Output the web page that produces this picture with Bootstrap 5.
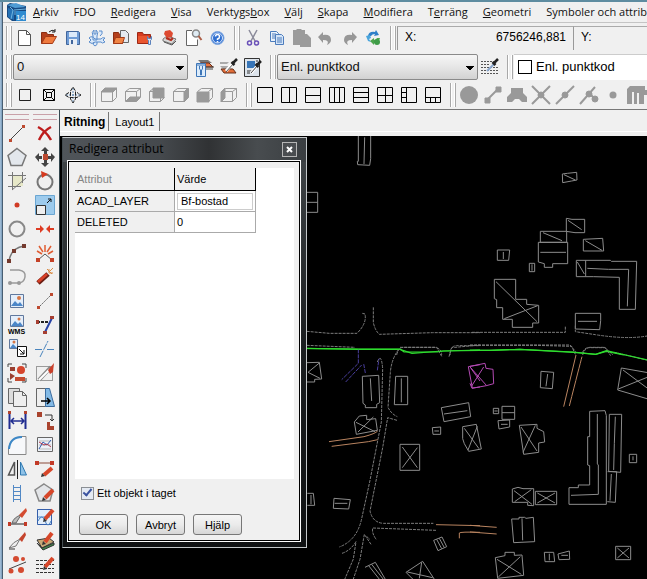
<!DOCTYPE html>
<html lang="sv">
<head>
<meta charset="utf-8">
<meta name="viewport" content="width=device-width, initial-scale=1">
<title>Redigera attribut</title>
<link rel="stylesheet" href="https://cdn.jsdelivr.net/npm/bootstrap@5.3.0/dist/css/bootstrap.min.css">
<style>
body{font:11px/16px "Liberation Sans",Arial,sans-serif;color:#000;background:#f0f0f0;overflow:hidden}
.shell{border-top:2px solid #5e8ca0;min-height:100vh}
.edge{width:3px;background:linear-gradient(90deg,#a9c4dc,#7e9fbd 60%,#22303c)}
.menu-row{height:21px;border-bottom:1px solid #c4c4c4;font:11px/18px "Open Sans","Noto Sans",sans-serif;gap:6px;white-space:nowrap}
.menu-items{gap:15px}
.menu-row a{color:#111;text-decoration:none}
.app-logo{width:20px;height:18px}
.tool-row{height:29px;padding-left:3px;white-space:nowrap}
.tool-row.last-row{border-bottom:1px solid #777}
.grip{width:6px;height:24px;margin-right:1px;flex:none;border:solid #a8a8a8;border-width:0 1px;background:linear-gradient(90deg,#fff 1px,#f0f0f0 1px 3px,#fff 3px)}
.tool + .grip{margin-left:5px}
.tool{width:24px;height:24px;padding:0;border:0;background:none;flex:none;display:block;fill:none}
.tool svg{display:block;width:24px;height:24px;stroke-width:1}
.combo{height:26px;flex:none;border:1px solid #8a8a8a;border-radius:2px;appearance:none;font:13px/20px "Liberation Sans",Arial,sans-serif;color:#111;padding:0 20px 0 3px;background:linear-gradient(to bottom right,#000 50%,transparent 52%) no-repeat right 3px top 11px/4px 4px,linear-gradient(to bottom left,#000 50%,transparent 52%) no-repeat right 7px top 11px/4px 4px,linear-gradient(#f6f6f6,#e6e6e6 50%,#d2d2d2)}
.layer-combo{width:175px;margin-right:5px}
.code-combo{width:201px}
.code-field{height:26px;background:#fff;border-top:1px solid #ccc;font:13px/20px "Liberation Sans",Arial,sans-serif;min-width:0}
.swatch{width:14px;height:14px;border:1px solid #000}
.coord{height:24px;border-top:1px solid #aaa;border-left:1px solid #999;font-size:12px;min-width:0;padding:2px 7px}
.coord-x{width:176px;flex:none}
.side{width:57px;padding:0 2px;border-right:1px solid #34474f}
.side-grid{display:grid;grid-template-columns:24px 24px;column-gap:4px}
.hgrip{height:6px;margin:4px 0 1px;border:solid #c9a0a8;border-width:1px 0}
.tabs{height:22px;border-bottom:1px solid #fff;margin-bottom:4px;padding-left:1px}
.tabs button{border:0;background:none;padding:0 5px 0 6px;border-right:1px solid #777;height:19px;line-height:18px;margin-top:2px}
.tabs .current{font-weight:bold;font-size:12px;padding:0 3px}
.map-area{background:#000;min-height:440px;overflow:hidden}
.map-area>svg{position:absolute;inset:0;width:100%;height:100%;fill:none;stroke:#8c8c8c}
.map-area>svg path{vector-effect:non-scaling-stroke}
.map-area .dashed{stroke-dasharray:3 1;stroke:#7c7c7c}
.map-area .green{stroke:#2fdc2f;stroke-width:1.2}
.map-area .tan{stroke:#b98460}
.map-area .violet{stroke:#4a3f9e;stroke-dasharray:4 1}
.map-area .magenta{stroke:#b44ab4}
.dlg{position:absolute;left:2px;top:1px;width:245px;padding:0 5px 5px 4px;border:1px solid #c4c8ca;border-left-color:#444c50;background:linear-gradient(90deg,#50555a,#45494d 40%,#303234 60%,#484c4f 80%,#3a3e41) top/100% 24px no-repeat,linear-gradient(#43484b,#1c1f21 50%,#101213)}
.dlg-title{height:22px;padding-left:2px;font:12px/20px "Open Sans","Noto Sans",sans-serif;color:#000}
.dlg-close{width:15px;height:15px;border:1px solid #b5b5b5;background:#4a4d50;padding:0}
.dlg-close svg{display:block;margin:auto}
.dlg-body{background:#f0f0f0;border:1px solid #fff;outline:1px solid #000;outline-offset:-2px;padding:7px 6px 6px 7px}
.sheet{background:#fff;min-height:311px}
.attr{width:181px;border-collapse:separate;border-spacing:0;line-height:14px}
.attr th,.attr td{height:21px;padding:0 2px;font-weight:normal;border-right:1px solid #aaa;border-bottom:1px solid #aaa}
.attr th{background:#f0f0f0}
.attr thead th{height:23px;border-color:#000}
.attr thead th:first-child{color:#858585}
.attr th:first-child{width:100px}
.attr input{width:76px;height:17px;border:1px solid #ccc;padding:0 3px;font:inherit;display:block}
.once{margin:6px 0 0 6px;gap:3px}
.once input{appearance:none;width:13px;height:13px;margin:0;border:1px solid #8b8f94;background:#e4eaf3;display:grid;place-items:center}
.once input:checked::before{content:"";width:5px;height:9px;border:solid #3a53a0;border-width:0 2px 2px 0;transform:rotate(40deg);margin-top:-3px}
.acts{margin:13px 0 0 4px;gap:8px}
.acts button{width:49px;height:21px;border:1px solid #777;border-radius:3px;background:linear-gradient(#f5f5f5,#ebebeb 50%,#d6d6d6);padding:0;line-height:18px;font-size:11px}
</style>
<script src="https://cdn.jsdelivr.net/npm/bootstrap@5.3.0/dist/js/bootstrap.bundle.min.js"></script>
</head>
<body>
<div class="shell d-flex">
<div class="edge flex-shrink-0"></div>
<div class="flex-grow-1 d-flex flex-column overflow-hidden">

<header>
<nav class="menu-row d-flex align-items-center ps-1" aria-label="Meny">
<svg class="app-logo flex-shrink-0" viewBox="0 0 20 18"><path d="M0 2l3-2 16 3v15H5L0 14z" fill="#174a83"/><path d="M0 2l9-2 10 4-11 1z" fill="#4f9cd4"/><path d="M1 5l6 2v10l-6-3z" fill="#2471b5"/><path d="M3 4l3 3-2 9M7 7l12-1M8 12V8" stroke="#6fb4e0" fill="none"/><path d="M9 8h10v10H9z" fill="#2f8bd0"/><text x="9" y="17" font-size="8" font-family="Liberation Sans" fill="#fff">14</text></svg>
<div class="menu-items d-flex"><a href="#"><u>A</u>rkiv</a><a href="#">FDO</a><a href="#"><u>R</u>edigera</a><a href="#"><u>V</u>isa</a><a href="#">Verktygs<u>b</u>ox</a><a href="#"><u>V</u>älj</a><a href="#"><u>S</u>kapa</a><a href="#"><u>M</u>odifiera</a><a href="#">T<u>e</u>rräng</a><a href="#"><u>G</u>eometri</a><a href="#">Symboler och attrib</a></div>
</nav>

<div class="tool-row d-flex align-items-center">
<span class="grip"></span>
<button class="tool" aria-label="Ny"><svg><path d="M5.500 4.500h8l4 4v11h-12z" fill="#fff" stroke="#555"/><path d="M13.500 4.500v4h4" stroke="#555"/></svg></button>
<button class="tool" aria-label="Öppna"><svg><path d="M4.500 17.500v-11h5l1 2h6v3" fill="#b5401d" stroke="#8c2e12"/><path d="M4.500 17.500l4-7h11l-4 7z" fill="#ef7a3d" stroke="#a53a17"/><path d="M12 6q3-3 6-1m0-2v3h-3" stroke="#222"/></svg></button>
<button class="tool" aria-label="Spara"><svg><path d="M5.500 5.500h12l1 1v12h-13z" fill="#6f9cd6" stroke="#42669c"/><path d="M8 6h8v5H8z" fill="#dceafa"/><path d="M8 13h8v6H8z" fill="#e8eef6"/><path d="M10 14h2v4h-2z" fill="#42669c"/></svg></button>
<button class="tool" aria-label="Verktyg"><svg stroke="#5b8dcc"><path d="M9 4v4h2V4q3 2 1 6v4h-4v-4q-2-4 1-6zM4 12q3-3 6 1h6q1-2 4-1l-2 2 2 2q-3 2-4 0h-6q-3 3-6 0l2-2zM9 16q-2 3 1 4 3-1 2-4M15 10q3-2 2-5h-3" fill="#dbe9f9"/></svg></button>
<button class="tool" aria-label="Öppna dokument"><svg><path d="M4.500 17.500v-11h5l1 2h3v9z" fill="#b5401d" stroke="#8c2e12"/><path d="M11.500 4.500h5l3 3v9h-8z" fill="#e4eaf0" stroke="#666"/><path d="M4.500 17.500l2-6h9l-2 6z" fill="#f08545" stroke="#a53a17"/></svg></button>
<button class="tool" aria-label="Mapp"><svg><path d="M4.500 17.500v-11h5l1 2h7v9z" fill="#d63b20" stroke="#9c2714"/><path d="M5 10h11v7H5z" fill="#e9552f"/><path d="M14.500 10.500v3l1 1v4h2v-4l1-1v-3l-1 2h-2z" fill="#d5e6fa" stroke="#5b83bd"/></svg></button>
<button class="tool" aria-label="Skriv ut"><svg><path d="M6 13l4-3 9 3-4 5-9-3z" fill="#d8d8d8" stroke="#777"/><path d="M7 16l8 3 4-4" stroke="#555"/><path d="M8 5l5-1 3 3-1 4-5 1-3-4z" fill="#dd4a31"/><path d="M9 12l5 2 2-2" stroke="#b12d1d" stroke-width="2"/></svg></button>
<button class="tool" aria-label="Förhandsgranska"><svg><path d="M5.500 4.500h11v15h-11z" fill="#fff"/><path d="M11 4.500H5.500v15h11v-6" stroke="#666"/><circle cx="15" cy="7.500" r="3.500" fill="#e0ecf4" stroke="#888" stroke-width="1.500"/><path d="M17.500 10l3 4" stroke="#ad5d45" stroke-width="2"/></svg></button>
<button class="tool" aria-label="Hjälp"><svg><circle cx="12.500" cy="12" r="6.500" fill="#2f6fd0" stroke="#7fa8e0"/><circle cx="12.500" cy="12" r="5" stroke="#dbe8fb"/><path d="M10.500 10.500q0-2 2-2t2 2-2 2.500v1m0 1v1.500" stroke="#fff" stroke-width="1.500"/></svg></button>
<span class="grip"></span>
<button class="tool" aria-label="Klipp ut"><svg><path d="M8 4l6 11M16 4l-6 11" stroke="#8a8a9a" stroke-width="1.500"/><circle cx="8.500" cy="17" r="2" stroke="#6a50b8" stroke-width="1.500"/><circle cx="15.500" cy="17" r="2" stroke="#6a50b8" stroke-width="1.500"/></svg></button>
<button class="tool" aria-label="Kopiera"><svg stroke="#4d7dbd"><path d="M5.500 5.500h6l2 2v8h-8z" fill="#eaf2fb"/><path d="M7 8h4M7 10h4M7 12h4"/><path d="M10.500 8.500h6l2 2v8h-8z" fill="#d4e4f7"/><path d="M12 12h5M12 14h5M12 16h5"/></svg></button>
<button class="tool" aria-label="Klistra in" disabled><svg><path d="M4 4h3l1-1h4l1 1h3v4h2l4 4v9H11v-2H4z" fill="#9b9b9b"/></svg></button>
<button class="tool" aria-label="Ångra" disabled><svg><path d="M5 11l5-5v3q8-1 8 5 0 3-4 5 3-5-4-5v3z" fill="#979797"/></svg></button>
<button class="tool" aria-label="Gör om" disabled><svg><path d="M20 11l-5-5v3q-8-1-8 5 0 3 4 5-3-5 4-5v3z" fill="#979797"/></svg></button>
<button class="tool" aria-label="Uppdatera"><svg><path d="M7 10q1-5 7-4l1-2 3 5-5 1 1-2q-3 0-4 2z" fill="#2e7fc8"/><path d="M5 10l4-1 1 3-2 1 2 3-3-1z" fill="#4aa5dc"/><path d="M19 12q-1 5-6 5v2l-4-4 4-3v2q2 0 3-2z" fill="#4ca54c"/><circle cx="16" cy="16" r="3" fill="#3f9c48"/></svg></button>
<span class="grip"></span>
<label class="coord coord-x d-flex justify-content-between">X: <output class="p-0">6756246,881</output></label>
<span class="coord flex-grow-1">Y:</span>
</div>

<div class="tool-row d-flex align-items-center">
<span class="grip"></span>
<select class="combo layer-combo" aria-label="Lager"><option>0</option></select>
<button class="tool" aria-label="Lager"><svg><path d="M5 5h10l4 3H8z" fill="#777"/><path d="M7 8h9l4 4h-9z" fill="#e8743e" stroke="#6b2d18"/><path d="M10 12h11M12 14h8" stroke="#444"/><path d="M3.500 8.500h9v13h-9z" fill="#dcecfb" stroke="#3e76b8"/><path d="M6.500 11v3l1 1v5h1v-5l1-1v-3M4 10h9" stroke="#3e76b8"/></svg></button>
<button class="tool" aria-label="Hämta lager"><svg><path d="M3 7h9l-2 2H3zM3 11h8l4 3H6z" fill="#aaa"/><path d="M4 14h12l3 4H7z" fill="#e26d38" stroke="#64301c"/><path d="M9 16l8-9" stroke="#fff" stroke-width="3"/><path d="M9 17l8-9" stroke="#555"/><path d="M14.500 7l3 3M16 8l4-4" stroke="#222" stroke-width="2.500"/></svg></button>
<button class="tool" aria-label="Egenskaper"><svg><path d="M3.500 3.500h15v18h-15z" fill="#dce3eb" stroke="#333"/><path d="M6 6h8v7H6z" fill="#3775b8"/><path d="M15 6h2M15 9h2M6 16h5M6 18h3" stroke="#333"/><path d="M10 18l7-8" stroke="#fff" stroke-width="3"/><path d="M10 18l7-8" stroke="#444"/><path d="M14.500 9l3 3M16 10l4-4" stroke="#222" stroke-width="2.500"/></svg></button>
<span class="grip"></span>
<select class="combo code-combo" aria-label="Punktkod"><option>Enl. punktkod</option></select>
<button class="tool" aria-label="Hämta punktkod"><svg><path d="M3 6.500h11M3 9.500h9M3 12.500h17M3 15.500h17M3 18.500h17" stroke="#555" stroke-dasharray="2 1"/><path d="M9 16l8-8" stroke="#8ba8cf" stroke-width="2"/><path d="M14.500 7l3 3M16 8l4-4" stroke="#222" stroke-width="2.500"/></svg></button>
<span class="grip"></span>
<div class="code-field flex-grow-1 d-flex align-items-center ps-1 gap-1"><span class="swatch"></span>Enl. punktkod</div>
</div>

<div class="tool-row last-row d-flex align-items-center">
<span class="grip"></span>
<button class="tool" aria-label="Rektangel"><svg stroke="#222"><path d="M6.500 6.500h11v11h-11z"/></svg></button>
<button class="tool" aria-label="Zooma allt"><svg stroke="#000"><path d="M6.500 6.500h11v11h-11zM9.500 9.500h5v5h-5zM6.500 6.500l3 3M17.500 6.500l-3 3M6.500 17.500l3-3M17.500 17.500l-3-3"/></svg></button>
<button class="tool" aria-label="Rotera vy"><svg stroke="#222"><path d="M12 5v14M5 12h14" stroke="#5d86b0" stroke-dasharray="2 1"/><path d="M9.500 8l2.500-4 2.500 4v8L12 20l-2.500-4zM8 9.500L4 12l4 2.500h8l4-2.500-4-2.500" stroke-dasharray="4 1"/></svg></button>
<span class="grip"></span>
<button class="tool" aria-label="Ovan" disabled><svg stroke="#999"><path d="M4.500 8.500h11v10h-11zM15.500 18.500l4-4v-9"/><path d="M4 9l4-4h12l-4 4z" fill="#999"/></svg></button>
<button class="tool" aria-label="Under" disabled><svg stroke="#999"><path d="M4.500 8.500l4-3h11v9l-4 4h-11zM4.500 8.500h11v10M15.500 8.500l4-3"/><path d="M5 18l4-4h10l-4 4z" fill="#999"/></svg></button>
<button class="tool" aria-label="Bak" disabled><svg stroke="#999"><path d="M8 5h11v10H8z" fill="#999"/><path d="M4.500 8.500h11v10h-11zM4.500 8.500l4-3M15.500 18.500l4-4"/></svg></button>
<button class="tool" aria-label="Höger" disabled><svg stroke="#999"><path d="M4.500 8.500l4-3h11v9l-4 4h-11zM4.500 8.500h11v10"/><path d="M15 9l4-4v10l-4 4z" fill="#999"/></svg></button>
<button class="tool" aria-label="Fram" disabled><svg stroke="#999"><path d="M4 9h12v10H4z" fill="#999"/><path d="M4.500 8.500l4-3h11v9l-4 4M15.500 8.500l4-3"/></svg></button>
<button class="tool" aria-label="Vänster" disabled><svg stroke="#999"><path d="M4.500 8.500l4-3h11v9l-4 4h-11zM4.500 8.500h11v10M15.500 8.500l4-3"/><path d="M4 9l4-4v10l-4 4z" fill="#999"/></svg></button>
<span class="grip"></span>
<button class="tool" aria-label="En vy"><svg stroke="#000"><path d="M4.500 4.500h15v15h-15z"/></svg></button>
<button class="tool" aria-label="Två kolumner"><svg stroke="#000"><path d="M4.500 4.500h15v15h-15zM12.500 5v14"/></svg></button>
<button class="tool" aria-label="Två rader"><svg stroke="#000"><path d="M4.500 4.500h15v15h-15zM5 12.500h14"/></svg></button>
<button class="tool" aria-label="Tre kolumner"><svg stroke="#000"><path d="M4.500 4.500h15v15h-15zM9.500 5v14M14.500 5v14"/></svg></button>
<button class="tool" aria-label="Tre rader"><svg stroke="#000"><path d="M4.500 4.500h15v15h-15zM5 9.500h14M5 14.500h14"/></svg></button>
<button class="tool" aria-label="Fyra vyer"><svg stroke="#000"><path d="M4.500 4.500h15v15h-15zM12.500 5v14M5 12.500h14"/></svg></button>
<button class="tool" aria-label="Tre till vänster"><svg stroke="#000"><path d="M4.500 4.500h15v15h-15zM9.500 5v14M5 9.500h4M5 14.500h4"/></svg></button>
<button class="tool" aria-label="Tre nedtill"><svg stroke="#000"><path d="M4.500 4.500h15v15h-15zM5 14.500h14M9.500 15v4M14.500 15v4"/></svg></button>
<span class="grip"></span>
<button class="tool" aria-label="Centrum" disabled><svg><circle cx="12" cy="12" r="9" fill="#999"/></svg></button>
<button class="tool" aria-label="Ände" disabled><svg fill="#999" stroke="#999"><path d="M6 17L17 6" stroke-width="2"/><path d="M4 15h5v5H4zM15 4h5v5h-5z"/></svg></button>
<button class="tool" aria-label="Symbol" disabled><svg><path d="M6 5h12v5l4 4v5h-5l-3-3h-4l-3 3H2v-5l4-4z" fill="#999"/></svg></button>
<button class="tool" aria-label="Skärning" disabled><svg stroke="#999"><path d="M3 3l18 18M3 21L21 3" stroke-width="2"/><circle cx="12" cy="12" r="3" fill="#999"/></svg></button>
<button class="tool" aria-label="Mitt" disabled><svg stroke="#999"><path d="M3 21L21 3" stroke-width="2"/><circle cx="12" cy="12" r="3" fill="#999"/></svg></button>
<button class="tool" aria-label="Närmast" disabled><svg stroke="#999"><path d="M3 21L18 4M11 9l9 9" stroke-width="2"/><circle cx="12" cy="11" r="3" fill="#999"/><circle cx="18" cy="16" r="3" fill="#999"/></svg></button>
<button class="tool" aria-label="Punkt" disabled><svg><circle cx="12" cy="12" r="3.500" fill="#999"/></svg></button>
<button class="tool" aria-label="Fästläge" disabled><svg><path d="M2 21V6l3-3h15v4h3v5h-4v9h-5V10h-2v11H9V9H7v12z" fill="#999"/></svg></button>
</div>
</header>

<div class="d-flex flex-grow-1">
<aside class="side flex-shrink-0">
<div class="side-grid">
<span class="hgrip"></span><span class="hgrip"></span>
<button class="tool" aria-label="Linje"><svg><path d="M5 19L18 6" stroke="#444"/><path d="M4 18h3v3H4zM17 4h3v3h-3z" fill="#bd4a30"/></svg></button>
<button class="tool" aria-label="Radera"><svg><path d="M5 6q8 4 13 13M18 6q-8 4-12 13" stroke="#bd1d1d" stroke-width="2.500"/></svg></button>
<button class="tool" aria-label="Polygon"><svg><path d="M12 3.500l9 7-4 10H6l-3-10z" fill="#e3e7ec" stroke="#777" stroke-width="1.500"/></svg></button>
<button class="tool" aria-label="Flytta"><svg><path d="M10 9h5v6h-5z" fill="#bd4a30"/><path d="M12 2l4 4h-2v3h-3V6H8zM12 22l4-4h-2v-3h-3v3H8zM2 12l4-4v3h3v3H6v3zM22 12l-4-4v3h-3v3h3v3z" fill="#444"/></svg></button>
<button class="tool" aria-label="Område"><svg><path d="M7 6h11v11H7z" fill="#e7e8c8"/><path d="M7.500 3v18M17.500 3v11M3 6.500h18M3 17.500h13M7 21L21 9" stroke="#777"/></svg></button>
<button class="tool" aria-label="Rotera"><svg><circle cx="12" cy="13" r="7.500" stroke="#777" stroke-width="2"/><path d="M8 2l7 3-6 4z" fill="#d63b20"/></svg></button>
<button class="tool" aria-label="Punkt"><svg><circle cx="12" cy="12" r="2.500" fill="#d13b25"/></svg></button>
<button class="tool" aria-label="Skala"><svg><path d="M2.500 2.500h19v19h-19z" fill="#9dcbed" stroke="#6aa6d2"/><path d="M3.500 12.500h9v9h-9z" fill="#eee" stroke="#333"/><path d="M14 10l4-4m-3 0h3v3" stroke="#111"/></svg></button>
<button class="tool" aria-label="Cirkel"><svg><circle cx="12" cy="12" r="7.500" stroke="#888" stroke-width="2"/></svg></button>
<button class="tool" aria-label="Förena"><svg><path d="M3 11h4V8l4 4-4 4v-3H3zM21 11h-4V8l-4 4 4 4v-3h4z" fill="#dd3b22"/></svg></button>
<button class="tool" aria-label="Båge"><svg><path d="M4 20Q6 7 19 5" stroke="#777" stroke-width="1.500"/><path d="M2 18h4v4H2zM7 8h4v4H7zM17 3h4v4h-4z" fill="#743a2e"/></svg></button>
<button class="tool" aria-label="Explodera"><svg><path d="M12 11v-7M10 11L6 5M14 11l4-6M9 13l-5-3M15 13l5-3" stroke="#e05c31" stroke-width="1.500"/><path d="M5 19l7-6 7 6" stroke="#555"/><path d="M3 17h4v4H3zM17 17h4v4h-4z" fill="#c44228"/></svg></button>
<button class="tool" aria-label="Polylinje"><svg><path d="M5 5h9q7 1 6 7t-7 6H4" stroke="#999" stroke-width="1.500"/><circle cx="5" cy="18" r="2" fill="#999"/><circle cx="14" cy="18" r="2" fill="#999"/></svg></button>
<button class="tool" aria-label="Trollspö"><svg><path d="M5 18L15 9" stroke="#6a1d13" stroke-width="5"/><path d="M5 17L14 9" stroke="#d84028" stroke-width="3"/><path d="M16 4v4h4M14 4l5 5M20 3l-3 3" stroke="#d88b45"/></svg></button>
<button class="tool" aria-label="Bild"><svg><path d="M5.500 5.500h13v13h-13z" fill="#e4eefa" stroke="#60789d"/><path d="M6 17l4-5 3 3 2-2 3 4z" fill="#4b86c8"/><circle cx="14" cy="9" r="2" fill="#d67645"/></svg></button>
<button class="tool" aria-label="Förläng"><svg><path d="M7 17L18 6" stroke="#666" stroke-dasharray="2 1"/><path d="M4 17h3v3H4zM17 4h3v3h-3z" fill="#bd4a30"/></svg></button>
<button class="tool" aria-label="WMS"><svg><path d="M5.500 2.500h13v11h-13z" fill="#e4eefa" stroke="#60789d"/><path d="M6 13l4-5 3 3 2-2 3 4z" fill="#4b86c8"/><circle cx="14" cy="6" r="1.500" fill="#d67645"/><text x="3" y="21" font-size="7" font-weight="bold" font-family="Liberation Sans" fill="#000">WMS</text></svg></button>
<button class="tool" aria-label="Trimma"><svg><path d="M4 9h12" stroke="#222" stroke-width="2" stroke-dasharray="3 1"/><path d="M12 19l7-14" stroke="#2641a5" stroke-width="2"/><path d="M3 7h3v4H3zM17 3h4v3h-4zM10 18h4v3h-4z" fill="#a63f32"/></svg></button>
<button class="tool" aria-label="Bildreferens"><svg><path d="M4.500 2.500h8v9h-8z" fill="#e4eefa" stroke="#60789d"/><path d="M5 11l3-4 4 4z" fill="#4b86c8"/><circle cx="9" cy="5" r="1.500" fill="#d67645"/><path d="M12.500 9.500h9v10h-9zM14 12l5 5m0-4v4h-4" fill="#fff" stroke="#111"/></svg></button>
<button class="tool" aria-label="Bryt linje"><svg><path d="M2 12.500h8M14 12.500h8M7 20l8-16" stroke="#4984bd" stroke-dasharray="7 1"/></svg></button>
<button class="tool" aria-label="Markera"><svg><path d="M3 6V3h4M17 3h4v4M3 17v4h4M21 17v4h-4" stroke="#444"/><path d="M5 6h5v4H5zM5 12l5 3-5 4z" fill="#9b3f30"/><circle cx="16" cy="9" r="4" fill="#d6452c"/><path d="M10 16h10v4H10z" fill="#c54b30"/></svg></button>
<button class="tool" aria-label="Klipp område"><svg><path d="M3.500 5.500h16v14h-16z" stroke="#444" stroke-dasharray="1 1"/><path d="M6 19L18 6" stroke="#888" stroke-width="4"/><path d="M6 19L17 8" stroke="#fff" stroke-width="2"/><path d="M15 9l6-7-1 9-3 2z" fill="#c9402b"/></svg></button>
<button class="tool" aria-label="Kopiera"><svg><path d="M3.500 3.500h11v15h-11z" fill="#ddd" stroke="#666"/><path d="M8.500 6.500h9l4 4v11h-13z" fill="#eee" stroke="#666"/><path d="M17.500 6.500v4h4" stroke="#666"/></svg></button>
<button class="tool" aria-label="Sträck"><svg><path d="M3.500 3.500h9v18h-9z" fill="#eee" stroke="#666"/><path d="M12.500 3.500h4l5 18h-9z" fill="#83bae6" stroke="#3b6c9f"/><path d="M8 16h9m-3-3l3 3-3 3" stroke="#000" stroke-width="1.500"/></svg></button>
<button class="tool" aria-label="Avstånd"><svg><path d="M4.500 4v16M20.500 4v16" stroke="#202c90" stroke-width="2"/><path d="M6 12h13M9 9l-3 3 3 3M16 9l3 3-3 3" stroke="#202c90" stroke-width="1.500"/><path d="M3 2h3v3H3zM19 2h3v3h-3z" fill="#b14530"/></svg></button>
<button class="tool" aria-label="Flytta och rotera"><svg><path d="M4 3h5v5H4zM14 13h3v4h4v4h-7z" fill="#a9432e"/><path d="M12 6h7v6m-2-2l2 2 2-2" stroke="#333"/></svg></button>
<button class="tool" aria-label="Avrunda"><svg><path d="M3.500 21.500V16Q5 4 17 3.500h4v18z" fill="#f7f8fa" stroke="#888"/><path d="M4 16Q5 4 17 4" stroke="#3d88c7" stroke-width="2"/></svg></button>
<button class="tool" aria-label="Diagram"><svg><path d="M4.500 4.500h15v14h-15z" fill="#eef2f8" stroke="#666"/><path d="M6 8h12M6 12h12M6 16h12" stroke="#bbb"/><path d="M6 16l4-7 4 3 4-5" stroke="#345eb0"/><path d="M6 9l5 3 3-1 4 3" stroke="#b33d50"/></svg></button>
<button class="tool" aria-label="Spegla"><svg><path d="M9.500 5v13h-6z" stroke="#555" stroke-width="1.500"/><path d="M15.500 5v13h6z" fill="#8fc2e8" stroke="#307ab2"/><path d="M12.500 3v19" stroke="#222"/></svg></button>
<button class="tool" aria-label="Redigera linje"><svg><path d="M4 6h15" stroke="#8a4b3b"/><path d="M2 4h4v4H2zM17 4h4v4h-4z" fill="#c23a27"/><path d="M11 18l8-7" stroke="#d7472a" stroke-width="4"/><path d="M8 20l1-4 3 3z" fill="#333"/></svg></button>
<button class="tool" aria-label="Stege"><svg><path d="M8.500 4v17M15.500 4v17M8 6.500h8M8 10.500h8M8 14.500h8M8 18.500h8" stroke="#5188c5"/></svg></button>
<button class="tool" aria-label="Redigera polygon"><svg><path d="M11 3l9 6-3 11H6L2 9z" fill="#e3e5e8" stroke="#888" stroke-width="1.500"/><path d="M12 17l8-8" stroke="#d7472a" stroke-width="4"/><path d="M9 20l1-4 3 3z" fill="#333"/></svg></button>
<button class="tool" aria-label="Dela linje"><svg><path d="M4 19h17" stroke="#222"/><path d="M3 17h3v4H3zM19 17h3v4h-3z" fill="#c23a27"/><path d="M7 18q2-6 9-8l-5 8z" fill="#bbb" stroke="#666"/><path d="M14 10l7-7 1 3-5 7z" fill="#d44c31"/></svg></button>
<button class="tool" aria-label="Redigera bild"><svg><path d="M4.500 4.500h14v15h-14z" fill="#e2edf9" stroke="#345eaa"/><path d="M5 16q4-8 7 0t6 0M5 12h12" stroke="#4b86c8"/><path d="M12 14l8-9" stroke="#d7472a" stroke-width="4"/><path d="M10 17l1-4 3 3z" fill="#333"/></svg></button>
<button class="tool" aria-label="Kniv"><svg><path d="M4 19q4-6 11-9l-4 7z" fill="#eee" stroke="#777"/><path d="M14 10l6-7 1 3-4 7z" fill="#c5442d"/><path d="M4 20h6" stroke="#333"/></svg></button>
<button class="tool" aria-label="Redigera yta"><svg><path d="M4 11l12-2 5 4-12 6z" fill="#c7a877" stroke="#333"/><path d="M4 14l5 5 12-5v2l-11 5z" fill="#3d8a4b" stroke="#333"/><path d="M12 13l7-9" stroke="#d7472a" stroke-width="4"/><path d="M9 16l1-4 3 3z" fill="#333"/></svg></button>
<button class="tool" aria-label="Dela"><svg fill="#d44a30"><path d="M4 16l17-7" stroke="#444"/><circle cx="11" cy="6" r="3"/><circle cx="18" cy="6" r="2"/><circle cx="6" cy="18" r="2.500"/><circle cx="16" cy="17" r="3"/></svg></button>
<button class="tool" aria-label="Redigera linjetyp"><svg><path d="M3 7.500h18M3 11.500h18M3 15.500h18M3 19.500h18" stroke="#333" stroke-dasharray="3 1"/><path d="M12 14l8-9" stroke="#d7472a" stroke-width="4"/><path d="M10 17l1-4 3 3z" fill="#333"/></svg></button>
</div>
</aside>

<main class="flex-grow-1 d-flex flex-column overflow-hidden">
<div class="tabs d-flex"><button class="current">Ritning</button><button>Layout1</button></div>
<div class="map-area flex-grow-1 position-relative">
<svg aria-label="Karta">
<g transform="translate(240 -6) scale(.33333)">
<path d="M175 18v76h-3l1 10 36 2 3-20V18M194 22l-2 80M20 187h33v60H20M20 217h33"/>
<path class="dashed" d="M20 604l68 6h83q30-30 24-58l-8-2M220 532v46q6 25 18 35l160-5h142M20 646l145 6M290 675q5-23 20-23h95q20 4 20 23M450 675q0-28 20-28h70"/>
<path class="green" d="M10 655l165 3h125l36 12 90-7 114-3"/>
</g>
<g transform="translate(410 -6) scale(.33333)">
<path d="M277 132l15-2 28-3 1 23-16 3-27 5zM282 134l34 16M289 265l17 3h38v40h-29l-26-4zM294 271l41 28M211 304h79v33h-79zM219 308l57 24M205 337h88v64h-45v11h-25v-11l-18-5zM211 367h77M340 328l58-3 3 38h-61zM346 332l50 29M82 360h37l-3 31H82zM100 366v21M178 400h16v25h-16zM186 403v19M319 391h102l3 3h76l-4 144h-48v-96l-78-2h-51zM347 391v48M322 396l21 36M352 415l64 3h60l-4 111M73 448h64v60h33v15l36 3v53h-18v13h-61v-24H98v-35H80v-24l-7-3zM78 455l123 120M103 566l100-39M316 550h76v22l-3 27-73-2zM324 574h57"/>
<path class="dashed" d="M6 607h280v-20M316 587v18l60 9q95 15 155 4M0 646h195l110 3 11 24M338 675q7-22 20-22h47l24 22"/>
<path class="green" d="M0 661h60l90-3 160 8 67 7 32-9 52 11"/>
</g>
<g transform="translate(240 209) scale(.33333)">
<path d="M20 53l38-1 7 50-21 1v8H20M58 54L24 82l36 18M187 94l49-3 3 82-9 5v10h-34v-8l-7-5zM211 100l4 68M287 94h36v85h-40zM304 100v72M163 231l15-18 22-2v13l27-3 5 35-63 12zM168 232l57 28M174 261l46-45M300 298h59v78h-59zM307 306l45 62M352 308l-45 60M424 188l82-15 6 42-80 15zM432 207l70-10M397 248l25-2v22h-23zM403 258h14M488 245l41-7 15 74-38 7-13-23-5-15zM493 250l44 61M532 244l-28 71M22 445h18l4 36H22M33 450v28M102 460l49 4-5 28-46-2zM104 475h38M401 586l25-10 14 29-26 12zM410 583l15 28M418 580l15 28M195 667l31-15 36 61M206 662l38 48M215 658l39 50M318 682l50-33 41 63M318 682l28 28M322 681l76 17M365 652l-7 48"/>
<path class="dashed" d="M232 51q12-30 16 20l-4 160-35 180-24 110q-14 65-67 85M296 13q-22 30-25 70l-7 104q10 20 28 28M291 226l-28-8-15 90-38 190q8 35 40 37h150M408 556l-190-7q-3 17 12 36M126 625q25-8 42-35l-8 52-28 66M213 598l-20-30-13 75-22 65M200 575q9 5 8 10"/>
<path class="dashed" d="M300 7h110l15 27M447 35l8-27 85-8"/>
<path class="violet" d="M175 13v42l-50 49M137 111l48-51M196 84l-5-28M232 76l5-35"/>
<path class="magenta" d="M540 59l-35 6 12 64 23-3M513 70l27 38"/>
<path class="tan" d="M87 290l105-15q34-9 41-17M95 304l110-14 28-6M408 539l132 3M478 580v-16q3-4 62-2"/>
<path class="green" d="M0 10l175 2h125l12 9h100l18-3 110-2"/>
</g>
<g transform="translate(410 209) scale(.33333)">
<path d="M213 79l38 3-4 49-36-3zM233 87l-5 37M454 69l80 14M454 69l-11 66 91 27M459 75l75 56M445 132l89-36M70 190h16v16H70zM73 198h10M96 184h38v39H96zM96 203h38M84 227l35-2v21l-32 6zM93 238h20M148 241l53-3v12l20 10 3 31-18 3v28l-45 6zM153 246l48 72M196 241l-37 81M359 199l46-2 4 15v266H297v-50h28v-8h34v-58l-6-2v-85h6zM382 207v150l3 3v88l-82 3M418 208h37l-3 174-36-3zM436 215l-3 80-2 80M413 380h27l-4 92-24-2M424 387l-4 80M478 328h22v25h-22zM489 334v12M127 432l17-5 15 4h32v51l-18-1v-9h-46zM132 437l54 41M184 434l-50 36M196 439h64v40h-64zM202 444l53 30M255 444l-53 30M125 522h22v-5h17l4 3 22-3 4 73-63 3zM156 520l2 66M76 638l29-6v-10h28v9l23-1 5 61-78 9zM81 643l73 45M151 635l-66 61M223 622h28l3 28h-29zM238 626v20M264 627l34-9 1 25-32 1zM274 631h20M437 604h45v40h-45zM442 609l35 30M477 609l-35 30"/>
<path class="dashed" d="M0 0h300l17 20M338 22q5-14 22-15h45l17 25M432 22l102 24"/>
<path class="magenta" d="M0 64l45-9 3 15 21 3 2 43-22 6-43 8-6-15M0 66l50 56M41 66L5 123"/>
<path class="tan" d="M318 30l-37 155M336 35q-8 30-38 148M0 541l80 6M0 561l80 6"/>
<path class="green" d="M0 16h60l90-3 160 9 67 6 32-11 125 28"/>
</g>
</svg>

<section class="dlg" role="dialog" aria-labelledby="dlgTitle">
<div class="dlg-title d-flex align-items-center justify-content-between"><span id="dlgTitle">Redigera attribut</span><button class="dlg-close me-1" aria-label="Stäng"><svg width="7" height="7"><path d="M1 1l5 5M6 1L1 6" stroke="#fff" stroke-width="2"/></svg></button></div>
<div class="dlg-body">
<div class="sheet">
<table class="attr"><thead><tr><th>Attribut</th><th>Värde</th></tr></thead>
<tbody><tr><th scope="row">ACAD_LAYER</th><td><input aria-label="ACAD_LAYER" value="Bf-bostad"></td></tr><tr><th scope="row">DELETED</th><td>0</td></tr></tbody></table>
</div>
<label class="once d-flex align-items-center"><input type="checkbox" checked>Ett objekt i taget</label>
<div class="acts d-flex"><button>OK</button><button>Avbryt</button><button>Hjälp</button></div>
</div>
</section>
</div>
</main>
</div>
</div>
</div>
</body>
</html>
